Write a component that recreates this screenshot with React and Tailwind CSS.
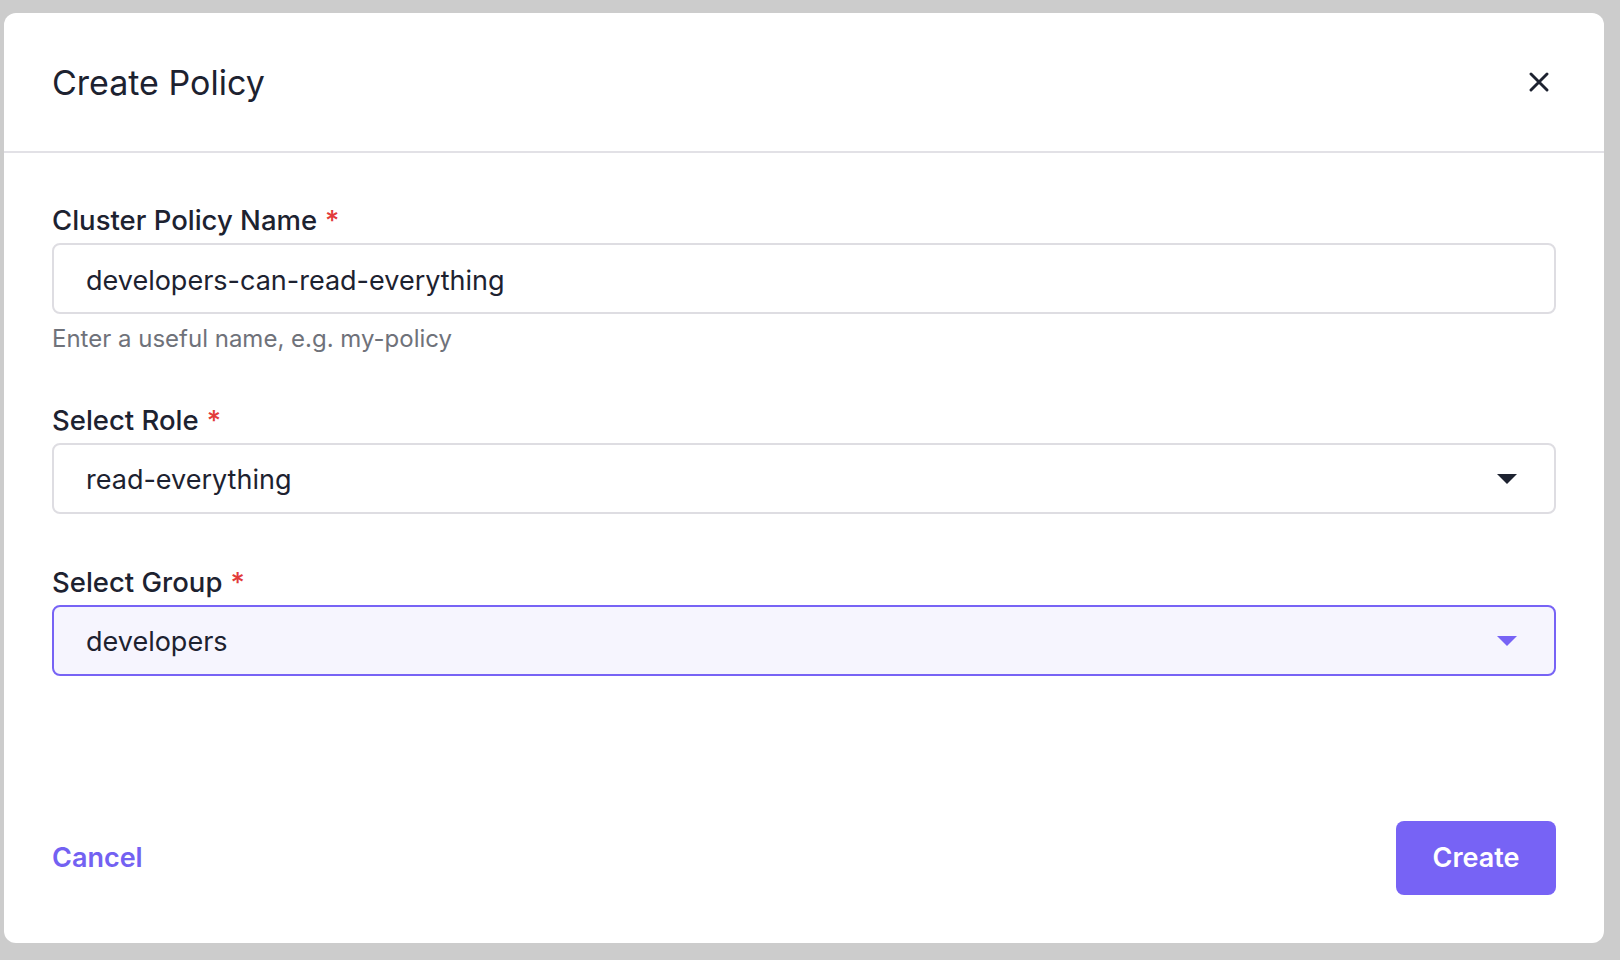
import React, { useState } from "react";

const font = { fontFamily: "Inter, 'Noto Sans', sans-serif" };

const Caret = ({ color }) => (
  <svg width="20" height="10" viewBox="0 0 20 10">
    <polygon points="0,0 20,0 10,10" fill={color} />
  </svg>
);

const Label = ({ children }) => (
  <div className="text-[27.5px] leading-[32px] font-medium text-[#1d2230] mb-[7px]">
    {children}
    <span className="text-[#e23b3b] ml-[8px]">*</span>
  </div>
);

const SelectBox = ({ value, active }) => (
  <div
    className={
      active
        ? "h-[71px] rounded-[8px] border-2 border-[#7763f5] bg-[#f6f5fe] flex items-center justify-between pl-[32px] pr-[37px]"
        : "h-[71px] rounded-[8px] border-2 border-[#dedde2] bg-white flex items-center justify-between pl-[32px] pr-[37px]"
    }
  >
    <span className="text-[27px] text-[#1d2230] pt-[4px]">{value}</span>
    <Caret color={active ? "#7763f5" : "#1d2230"} />
  </div>
);

export default function App() {
  const [name, setName] = useState("developers-can-read-everything");

  return (
    <div className="w-[1620px] h-[960px] bg-[#cccccc] pt-[13px] pl-[4px]" style={font}>
      <div className="w-[1600px] h-[930px] bg-white rounded-[12px] flex flex-col">
        {/* header */}
        <div className="h-[140px] border-b-2 border-[#e2e1e6] flex items-center justify-between pl-[48px] pr-[55px]">
          <h1 className="text-[34px] text-[#1d2230] leading-none pt-[2px]">Create Policy</h1>
          <button className="text-[#1d2230]">
            <svg width="20" height="20" viewBox="0 0 20 20">
              <path d="M2 2 L18 18 M18 2 L2 18" stroke="currentColor" strokeWidth="2.9" strokeLinecap="round" />
            </svg>
          </button>
        </div>

        {/* body */}
        <div className="flex-1 px-[48px] pt-[51px]">
          <Label>Cluster Policy Name</Label>
          <input
            value={name}
            onChange={(e) => setName(e.target.value)}
            className="w-full h-[71px] rounded-[8px] border-2 border-[#dedde2] pl-[32px] pt-[4px] text-[27px] text-[#1d2230] outline-none"
          />
          <div className="text-[24px] leading-[32px] text-[#6f727a] mt-[9px]">
            Enter a useful name, e.g. my-policy
          </div>

          <div className="mt-[49px]">
            <Label>Select Role</Label>
            <SelectBox value="read-everything" />
          </div>

          <div className="mt-[52px]">
            <Label>Select Group</Label>
            <SelectBox value="developers" active />
          </div>
        </div>

        {/* footer */}
        <div className="flex items-center justify-between px-[48px] pb-[48px]">
          <button className="text-[27px] font-semibold text-[#7361f2]">Cancel</button>
          <button className="w-[160px] h-[74px] rounded-[8px] bg-[#7763f5] text-white text-[27px] font-semibold">
            Create
          </button>
        </div>
      </div>
    </div>
  );
}
